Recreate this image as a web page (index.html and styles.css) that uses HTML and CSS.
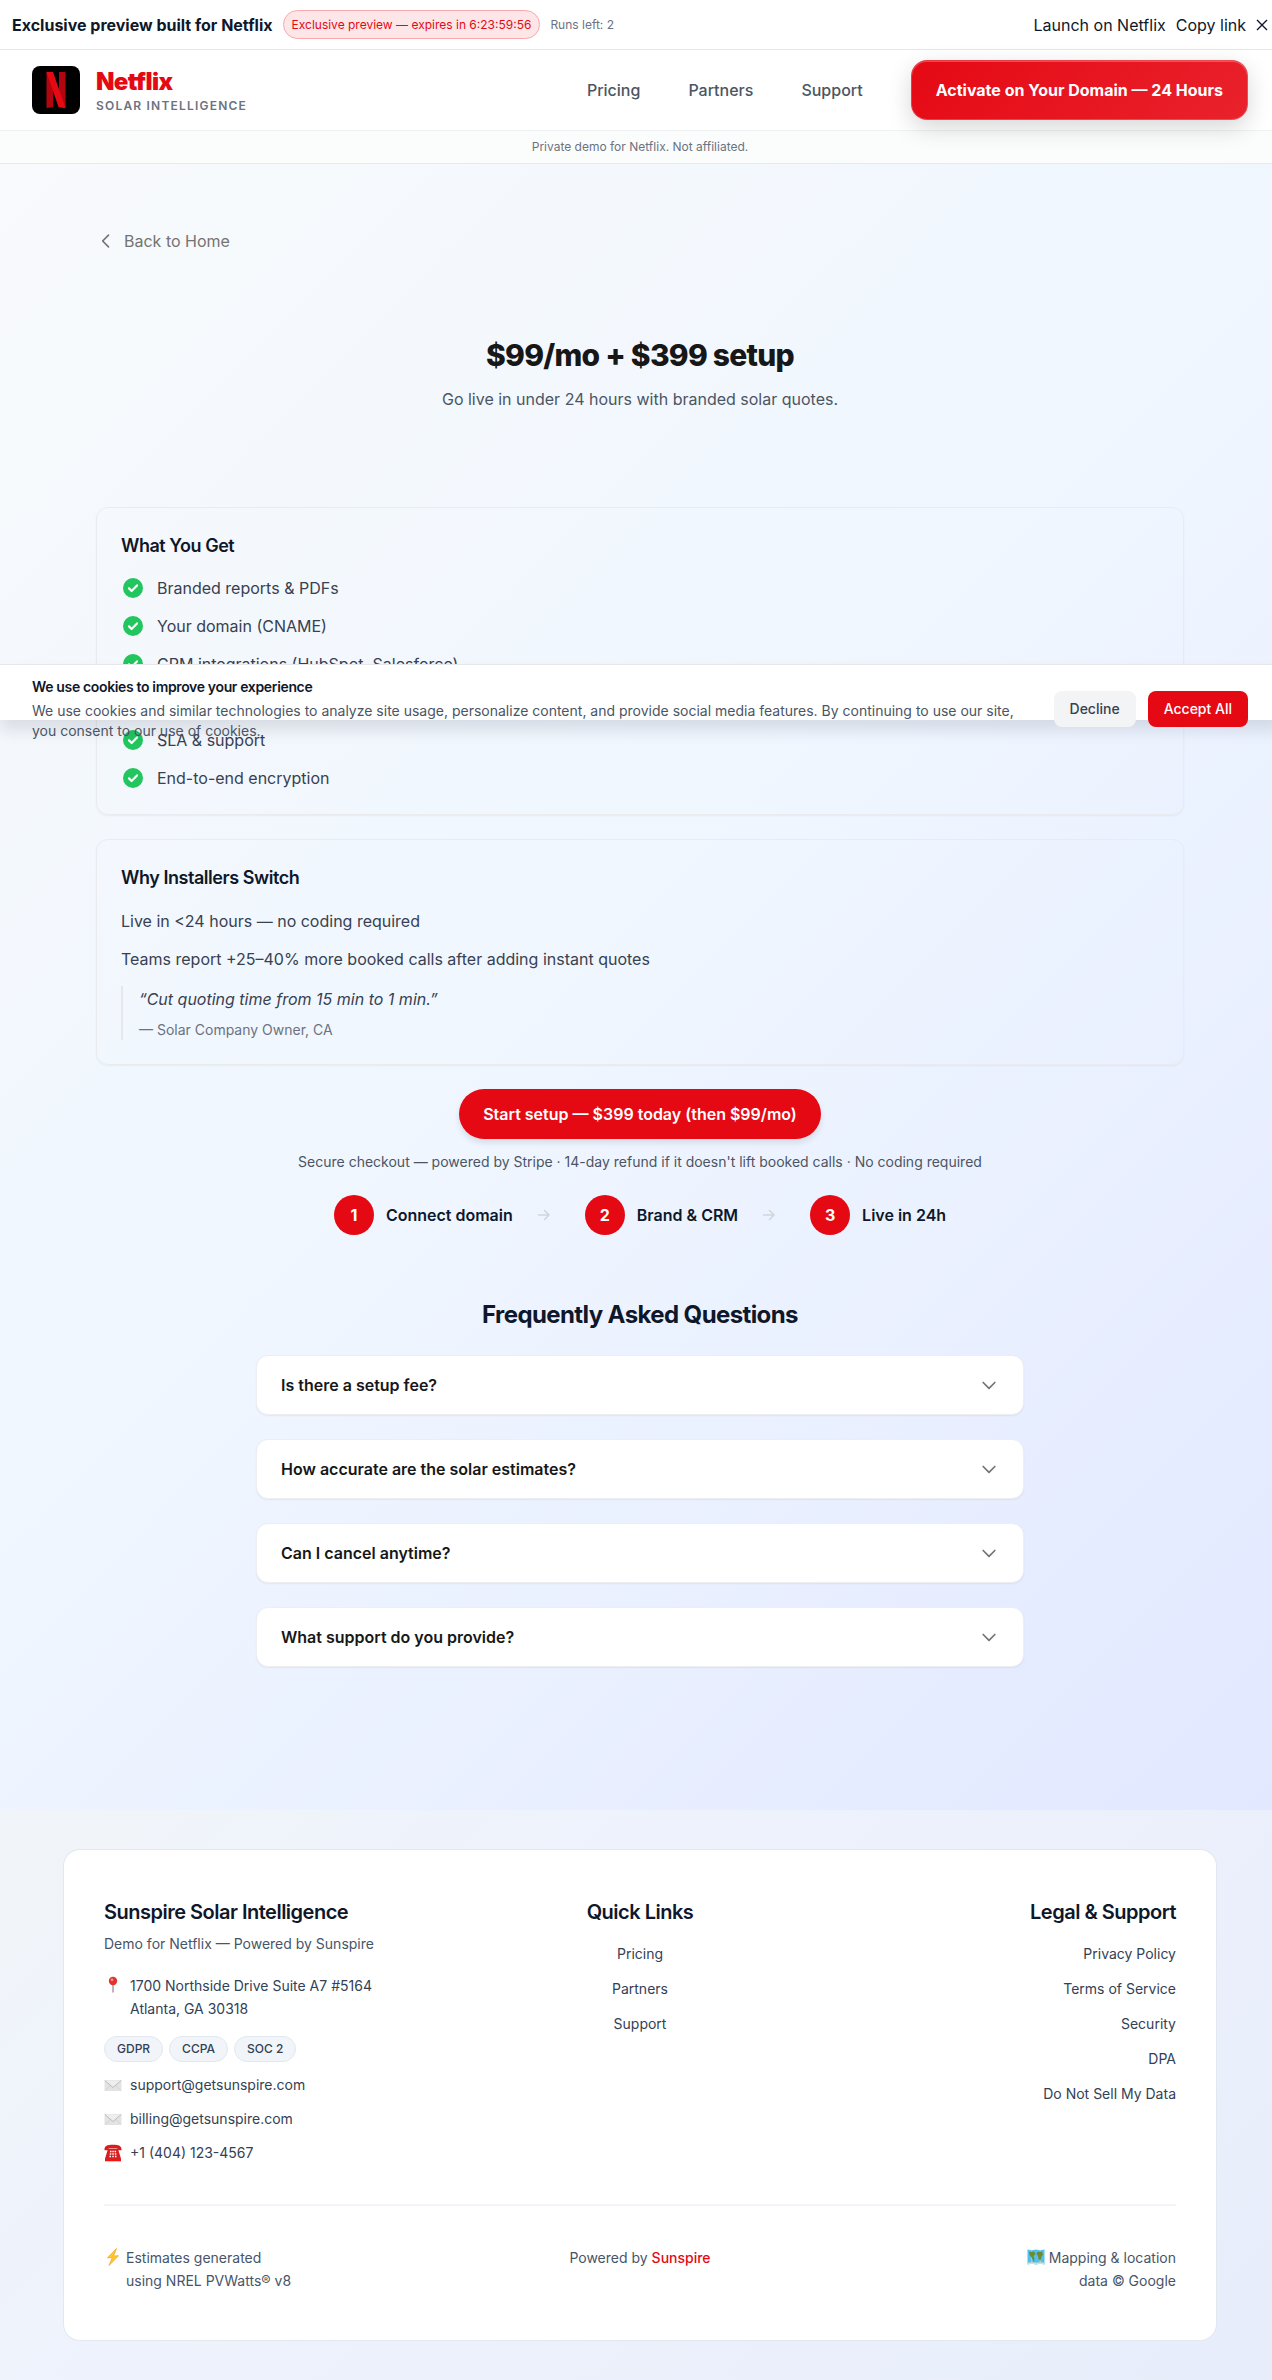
FILE: index.html
```html
<!DOCTYPE html>
<html lang="en">
<head>
<meta charset="utf-8">
<meta name="viewport" content="width=device-width, initial-scale=1">
<title>Netflix Solar Intelligence — Pricing</title>
<link rel="stylesheet" href="styles.css">
</head>
<body>
<svg class="sprite" aria-hidden="true">
  <symbol id="check" viewBox="0 0 24 24"><circle cx="12" cy="12" r="10" fill="#22c55e"/><path d="M8 12.4l2.6 2.6 5.4-5.6" fill="none" stroke="#fff" stroke-width="2.2" stroke-linecap="round" stroke-linejoin="round"/></symbol>
  <symbol id="chevron" viewBox="0 0 24 24"><path d="M19 9l-7 7-7-7" fill="none" stroke="currentColor" stroke-width="2" stroke-linecap="round" stroke-linejoin="round"/></symbol>
  <symbol id="arrow" viewBox="0 0 24 24"><path d="M1.500 12h10.500M7.500 7.500L12 12l-4.500 4.500" fill="none" stroke="currentColor" stroke-width="1.500" stroke-linecap="round" stroke-linejoin="round"/></symbol>
  <symbol id="mail" viewBox="0 0 18 18"><rect x="0.500" y="4" width="17" height="11" rx="0.800" fill="#e3e3e3"/><path d="M1 14.500l6-5.500M17 14.500l-6-5.500" stroke="#cfcfcf" stroke-width="0.800"/><path d="M0.800 4.500L9 11.500l8.200-7" fill="#eeeeee" stroke="#b5b5b5" stroke-width="0.900"/></symbol>
</svg>

<div class="preview-bar">
  <strong class="preview-title">Exclusive preview built for Netflix</strong>
  <span class="preview-pill">Exclusive preview — expires in 6:23:59:56</span>
  <span class="preview-runs">Runs left: 2</span>
  <div class="preview-actions">
    <button class="plain-button" type="button">Launch on Netflix</button>
    <button class="plain-button" type="button">Copy link</button>
    <button class="plain-button close-button" type="button" aria-label="Close"><svg width="12" height="12" viewBox="0 0 12 12"><path d="M1 1l10 10M11 1L1 11" stroke="currentColor" stroke-width="1.400"/></svg></button>
  </div>
</div>

<header class="header">
  <div class="header-row">
    <a class="brand" href="#">
      <svg class="brand-logo" width="48" height="48" viewBox="0 0 48 48" aria-hidden="true"><rect width="48" height="48" rx="8"/><path d="M14.500 6h6.500v35l-6.500 1zM27 6h6.500v36l-6.500-1z" fill="#b1060f"/><path d="M14.500 6H21l12.500 36-7-1z" fill="#e50914"/></svg>
      <span class="brand-text">
        <span class="brand-name">Netflix</span>
        <span class="brand-tag">Solar Intelligence</span>
      </span>
    </a>
    <nav class="nav">
      <a class="nav-link" href="#">Pricing</a>
      <a class="nav-link" href="#">Partners</a>
      <a class="nav-link" href="#">Support</a>
      <button class="activate" type="button">Activate on Your Domain — 24 Hours</button>
    </nav>
  </div>
  <p class="disclaimer">Private demo for Netflix. Not affiliated.</p>
</header>

<main class="main">
  <div class="container">
    <a class="back" href="#"><svg width="20" height="20" viewBox="0 0 24 24" aria-hidden="true"><path d="M15 19l-7-7 7-7" fill="none" stroke="currentColor" stroke-width="2" stroke-linecap="round" stroke-linejoin="round"/></svg>Back to Home</a>

    <section class="hero">
      <h1 class="hero-title">$99/mo + $399 setup</h1>
      <p class="hero-sub">Go live in under 24 hours with branded solar quotes.</p>
    </section>

    <section class="card">
      <h2 class="card-title">What You Get</h2>
      <ul class="features">
        <li class="feature"><svg class="feature-icon"><use href="#check"/></svg>Branded reports &amp; PDFs</li>
        <li class="feature"><svg class="feature-icon"><use href="#check"/></svg>Your domain (CNAME)</li>
        <li class="feature"><svg class="feature-icon"><use href="#check"/></svg>CRM integrations (HubSpot, Salesforce)</li>
        <li class="feature"><svg class="feature-icon"><use href="#check"/></svg></li>
        <li class="feature"><svg class="feature-icon"><use href="#check"/></svg>SLA &amp; support</li>
        <li class="feature"><svg class="feature-icon"><use href="#check"/></svg>End-to-end encryption</li>
      </ul>
    </section>

    <section class="card">
      <h2 class="card-title">Why Installers Switch</h2>
      <p class="card-text">Live in &lt;24 hours — no coding required</p>
      <p class="card-text">Teams report +25–40% more booked calls after adding instant quotes</p>
      <blockquote class="quote">
        <p class="quote-text">“Cut quoting time from 15 min to 1 min.”</p>
        <footer class="quote-source">— Solar Company Owner, CA</footer>
      </blockquote>
    </section>

    <section class="checkout">
      <button class="start" type="button">Start setup — $399 today (then $99/mo)</button>
      <p class="checkout-note">Secure checkout — powered by Stripe · 14-day refund if it doesn't lift booked calls · No coding required</p>
      <div class="steps">
        <div class="step"><span class="step-number">1</span>Connect domain</div>
        <svg class="step-arrow" aria-hidden="true"><use href="#arrow"/></svg>
        <div class="step"><span class="step-number">2</span>Brand &amp; CRM</div>
        <svg class="step-arrow" aria-hidden="true"><use href="#arrow"/></svg>
        <div class="step"><span class="step-number">3</span>Live in 24h</div>
      </div>
    </section>

    <section class="faq">
      <h2 class="faq-title">Frequently Asked Questions</h2>
      <button class="faq-item" type="button">Is there a setup fee?<svg class="faq-icon"><use href="#chevron"/></svg></button>
      <button class="faq-item" type="button">How accurate are the solar estimates?<svg class="faq-icon"><use href="#chevron"/></svg></button>
      <button class="faq-item" type="button">Can I cancel anytime?<svg class="faq-icon"><use href="#chevron"/></svg></button>
      <button class="faq-item" type="button">What support do you provide?<svg class="faq-icon"><use href="#chevron"/></svg></button>
    </section>
  </div>
</main>

<footer class="footer">
  <div class="footer-card">
    <div class="footer-grid">
      <div>
        <h3 class="footer-title">Sunspire Solar Intelligence</h3>
        <p class="footer-demo">Demo for Netflix — Powered by Sunspire</p>
        <address class="contact-row address">
          <svg class="contact-icon" viewBox="0 0 18 18"><path d="M8.300 7h1.400v9l-.7 1-.7-1z" fill="#a39a96"/><circle cx="9" cy="5" r="4.200" fill="#e0342c"/><circle cx="8" cy="3.800" r="1.300" fill="#f79a92"/></svg>
          <span>1700 Northside Drive Suite A7 #5164<br>Atlanta, GA 30318</span>
        </address>
        <div class="badges"><span class="badge">GDPR</span><span class="badge">CCPA</span><span class="badge">SOC 2</span></div>
        <ul class="contacts">
          <li class="contact-row"><svg class="contact-icon"><use href="#mail"/></svg><a href="#">support@getsunspire.com</a></li>
          <li class="contact-row"><svg class="contact-icon"><use href="#mail"/></svg><a href="#">billing@getsunspire.com</a></li>
          <li class="contact-row"><svg class="contact-icon" viewBox="0 0 18 18"><path d="M0.500 5.500C.5 2 3 .8 9 .8s8.500 1.200 8.500 4.700v.8h-4.200V4.500H4.700v1.800H.5z" fill="#d81f1f"/><path d="M4 5h10l3 9.500v2.200H1v-2.200z" fill="#d81f1f"/><path d="M1 15.500h16v1.800H1z" fill="#f01414"/><path d="M6 7.500h1.500M8.300 7.500h1.500M10.600 7.500h1.500M5.800 10h1.500M8.300 10h1.500M10.800 10h1.500M5.500 12.500H7M8.300 12.500h1.500M11 12.500h1.500" stroke="#fff" stroke-width="1.500"/></svg><a href="#">+1 (404) 123-4567</a></li>
        </ul>
      </div>
      <div class="footer-center">
        <h3 class="footer-title">Quick Links</h3>
        <ul class="footer-links">
          <li><a href="#">Pricing</a></li>
          <li><a href="#">Partners</a></li>
          <li><a href="#">Support</a></li>
        </ul>
      </div>
      <div class="footer-right">
        <h3 class="footer-title">Legal &amp; Support</h3>
        <ul class="footer-links">
          <li><a href="#">Privacy Policy</a></li>
          <li><a href="#">Terms of Service</a></li>
          <li><a href="#">Security</a></li>
          <li><a href="#">DPA</a></li>
          <li><a href="#">Do Not Sell My Data</a></li>
        </ul>
      </div>
    </div>
    <div class="footer-grid footer-bottom">
      <p class="credit">
        <svg class="contact-icon" viewBox="0 0 18 18"><path d="M12.500.5L3.500 9.800l4.800-.2L5 17.500l9.500-9.800-5 .3z" fill="#fdc92f" stroke="#f6a524" stroke-width="0.800"/></svg>
        <span>Estimates generated<br>using NREL PVWatts® v8</span>
      </p>
      <p class="footer-center">Powered by <a class="accent" href="#">Sunspire</a></p>
      <p class="credit credit-right">
        <svg class="contact-icon" viewBox="0 0 18 18"><path d="M.5 1.500l4.300.8L9 1.500l4.200.8 4.300-.8v15l-4.300-.8-4.200.8-4.200-.8-4.300.8z" fill="#52c0ee"/><path d="M4.800 2.300v13.400M13.200 2.300v13.400" stroke="#9bdcf7"/><path d="M2 4l5-.5L8.500 6 6.500 8l1 3-1 3L5 10 2.500 7zM10 4l5-.5 1 3-1.500 2-1 4-2-1.500L11 8 9.500 6z" fill="#6f8b2e"/><path d="M.5 15.500l4.300-.6 4.200.6 4.200-.6 4.300.6" fill="none" stroke="#e8d9b5" stroke-width="1.500"/></svg>
        <span>Mapping &amp; location<br>data © Google</span>
      </p>
    </div>
  </div>
</footer>

<aside class="cookies" aria-label="Cookie consent">
  <div class="cookies-row">
    <div class="cookies-copy">
      <h2 class="cookies-title">We use cookies to improve your experience</h2>
      <p class="cookies-text">We use cookies and similar technologies to analyze site usage, personalize content, and provide social media features. By continuing to use our site, you consent to our use of cookies.</p>
    </div>
    <div class="cookies-actions">
      <button class="cookie-button" type="button">Decline</button>
      <button class="cookie-button cookie-accept" type="button">Accept All</button>
    </div>
  </div>
</aside>
</body>
</html>
```
FILE: styles.css
```css
* { box-sizing: border-box; margin: 0; padding: 0; }

html { overflow-x: hidden; }

body {
  position: relative;
  width: calc(100% + 8px);
  font-family: Inter, "Liberation Sans", sans-serif;
  font-size: 16px;
  line-height: 24px;
  color: #0f172a;
  background: #fff;
  -webkit-font-smoothing: antialiased;
}

button { font: inherit; color: inherit; border: 0; background: none; cursor: pointer; }
a { color: inherit; text-decoration: none; }
ul { list-style: none; }
svg { display: block; flex-shrink: 0; }
.sprite { position: absolute; width: 0; height: 0; }

/* Preview bar */
.preview-bar {
  display: flex;
  align-items: center;
  gap: 10px;
  padding: 10px 12px;
  border-bottom: 1px solid #e5e7eb;
}
.preview-title { font-weight: 700; }
.preview-pill {
  padding: 4px 8px;
  border: 1px solid #f9a8ad;
  border-radius: 999px;
  background: #fce6e7;
  color: #e50914;
  font-size: 12px;
  line-height: 19px;
}
.preview-runs { font-size: 12px; color: #6b7280; }
.preview-actions { display: flex; align-items: center; gap: 10px; margin-left: auto; }

/* Header */
.header { position: relative; border-bottom: 1px solid #e5eaf0; }
.header-row {
  display: flex;
  align-items: center;
  justify-content: space-between;
  height: 80px;
  padding: 0 32px;
}
.brand { display: flex; align-items: center; gap: 16px; }
.brand-text { display: flex; flex-direction: column; }
.brand-name {
  font-size: 24px;
  line-height: 32px;
  font-weight: 900;
  letter-spacing: -0.025em;
  color: #e50914;
}
.brand-tag {
  font-size: 12px;
  line-height: 16px;
  font-weight: 600;
  letter-spacing: 0.1em;
  text-transform: uppercase;
  color: #6b7280;
}
.nav { display: flex; align-items: center; gap: 48px; }
.nav-link { font-weight: 500; color: #4b5563; }
.activate {
  padding: 17px 24px;
  border: 1px solid rgba(255, 255, 255, 0.2);
  border-radius: 16px;
  background: linear-gradient(135deg, #e50914, #e9222c) border-box;
  box-shadow: 0 8px 24px rgba(0, 0, 0, 0.16), inset 0 1px 0 rgba(255, 255, 255, 0.25);
  color: #fff;
  font-weight: 700;
}
.disclaimer {
  padding: 8px;
  border-top: 1px solid #eef2f4;
  background: rgba(248, 252, 251, 0.5);
  font-size: 12px;
  line-height: 16px;
  text-align: center;
  color: #6b7280;
}

/* Main */
.main {
  padding: 64px 32px 143px;
  background: linear-gradient(135deg, #f8fafc, #eff6ff 50%, #e2e8ff);
}
.container { max-width: 1088px; margin: 0 auto; }
.back {
  display: flex;
  align-items: center;
  gap: 8px;
  width: fit-content;
  line-height: 26px;
  color: #737373;
}
.hero { padding: 83px 0 96px; text-align: center; }
.hero-title {
  font-size: 30px;
  line-height: 36px;
  font-weight: 800;
  letter-spacing: -0.025em;
  color: #171717;
}
.hero-sub { margin-top: 14px; color: #4b5563; }

.card {
  margin-bottom: 24px;
  padding: 24px;
  border: 1px solid #e9ebef;
  border-radius: 12px;
  box-shadow: 0 1px 2px rgba(0, 0, 0, 0.05);
  color: #374151;
}
.card-title {
  margin-bottom: 16px;
  font-size: 18px;
  line-height: 28px;
  font-weight: 600;
  letter-spacing: -0.025em;
  color: #0f172a;
}
.features { display: flex; flex-direction: column; gap: 14px; }
.feature { display: flex; align-items: center; gap: 12px; }
.feature-icon { width: 24px; height: 24px; }
.card-text { margin-bottom: 12px; line-height: 26px; }
.quote { margin-top: 14px; padding-left: 16px; border-left: 2px solid #e5e7eb; }
.quote-text { line-height: 26px; font-style: italic; }
.quote-source { margin-top: 8px; font-size: 14px; line-height: 20px; color: #6b7280; }

.checkout { display: flex; flex-direction: column; align-items: center; }
.start {
  padding: 12px 24px;
  border-radius: 999px;
  background: #e50914;
  box-shadow: 0 4px 6px rgba(0, 0, 0, 0.1);
  color: #fff;
  line-height: 26px;
  font-weight: 600;
}
.checkout-note { margin-top: 12px; font-size: 14px; line-height: 22px; color: #4b5563; }
.steps { display: flex; align-items: center; gap: 24px; margin-top: 22px; }
.step { display: flex; align-items: center; gap: 12px; font-weight: 600; }
.step-number {
  width: 40px;
  border-radius: 50%;
  background: #e50914;
  color: #fff;
  line-height: 40px;
  font-weight: 700;
  text-align: center;
}
.step-arrow { width: 24px; height: 24px; color: #d1d5db; }

.faq {
  display: flex;
  flex-direction: column;
  gap: 24px;
  max-width: 768px;
  margin: 64px auto 0;
}
.faq-title {
  font-size: 24px;
  line-height: 32px;
  font-weight: 700;
  letter-spacing: -0.025em;
  text-align: center;
}
.faq-item {
  display: flex;
  align-items: center;
  justify-content: space-between;
  padding: 16px 24px;
  border: 1px solid #eceef2;
  border-radius: 12px;
  background: #fff;
  box-shadow: 0 1px 2px rgba(0, 0, 0, 0.06);
  color: #171717;
  line-height: 26px;
  font-weight: 600;
  text-align: left;
}
.faq-icon { width: 20px; height: 20px; color: #737373; }

/* Footer */
.footer {
  padding: 40px 64px;
  background: linear-gradient(135deg, #f1f5f9, #eef3fc 30%, #e8edfb);
}
.footer-card {
  max-width: 1152px;
  margin: 0 auto;
  padding: 48px 40px;
  border-radius: 16px;
  background: #fff;
  box-shadow: 0 0 0 1px #e2e8f0;
  color: #334155;
  font-size: 14px;
  line-height: 23px;
}
.footer-grid { display: grid; grid-template-columns: repeat(3, 1fr); }
.footer-center { text-align: center; }
.footer-right { text-align: right; }
.footer-title {
  font-size: 20px;
  line-height: 28px;
  font-weight: 600;
  letter-spacing: -0.025em;
  color: #0f172a;
}
.footer-demo { margin: 8px 0 20px; line-height: 20px; color: #475569; }
.contact-row { display: flex; align-items: center; gap: 8px; }
.contact-icon { width: 18px; height: 18px; }
.address { align-items: flex-start; font-style: normal; }
.address .contact-icon { margin-top: 2px; }
.badges { display: flex; gap: 6px; margin: 16px 0 12px; }
.badge {
  padding: 0 12px;
  border: 1px solid #e2e8f0;
  border-radius: 999px;
  background: #f1f5f9;
  font-size: 12px;
  line-height: 24px;
  font-weight: 500;
}
.contacts { display: flex; flex-direction: column; gap: 12px; line-height: 22px; }
.footer-links { display: flex; flex-direction: column; gap: 12px; margin-top: 16px; }
.footer-bottom {
  margin-top: 40px;
  padding-top: 40px;
  border-top: 2px solid #f1f5f9;
  color: #475569;
}
.credit { display: flex; gap: 4px; }
.credit .contact-icon { margin-top: 2px; }
.credit-right { justify-content: flex-end; text-align: right; }
.accent { color: #e50914; font-weight: 500; }

/* Cookie bar: floats above the page, its copy may run past its edge */
.cookies {
  position: absolute;
  top: 664px;
  left: 0;
  right: 0;
  height: 56px;
  padding: 12px 32px;
  border-top: 1px solid #e5e7eb;
  background: #fff;
  box-shadow: 0 10px 15px rgba(15, 23, 42, 0.12);
  font-size: 14px;
  line-height: 20px;
}
.cookies-row { display: flex; align-items: center; justify-content: space-between; gap: 32px; }
.cookies-title { margin-bottom: 4px; font-size: 14px; font-weight: 600; letter-spacing: -0.025em; }
.cookies-text { color: #4b5563; }
.cookies-actions { display: flex; flex-shrink: 0; gap: 12px; }
.cookie-button {
  padding: 8px 16px;
  border-radius: 8px;
  background: #f3f4f6;
  color: #374151;
  font-weight: 500;
}
.cookie-accept { background: #e50914; color: #fff; }
```
